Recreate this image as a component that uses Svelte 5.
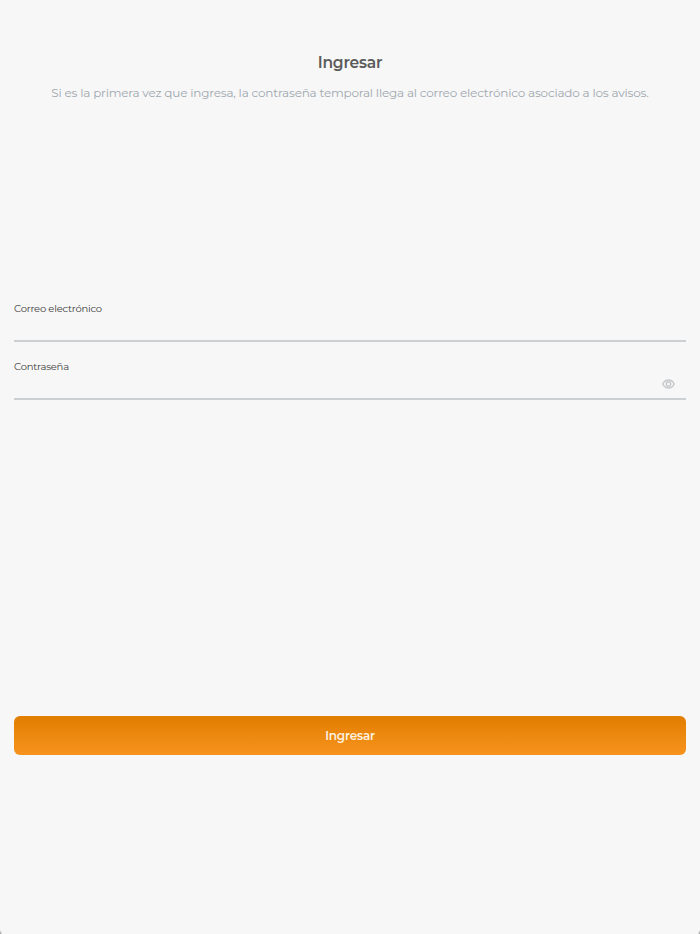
<script>
  let email = $state('');
  let password = $state('');
  let visible = $state(false);
</script>

<main>
  <header>
    <h1>Ingresar</h1>
    <p>Si es la primera vez que ingresa, la contraseña temporal llega al correo electrónico asociado a los avisos.</p>
  </header>
  <form onsubmit={(e) => e.preventDefault()}>
    <div class="fields">
      <div class="field">
        <label for="email">Correo electrónico</label>
        <input id="email" type="email" bind:value={email} />
      </div>
      <div class="field">
        <label for="password">Contraseña</label>
        <div class="row">
          <input id="password" type={visible ? 'text' : 'password'} bind:value={password} />
          <button class="eye" type="button" aria-label="Mostrar" onclick={() => (visible = !visible)}>
            <svg width="13" height="10" viewBox="0 0 13 10" fill="none" stroke="#c8c9cb">
              <path d="M.8 5C2 2.400 4.100 1 6.500 1s4.500 1.400 5.700 4C11 7.600 8.900 9 6.500 9S2 7.600.8 5Z" stroke-width="1.500" />
              <circle cx="6.500" cy="5" r="2.200" stroke-width="1.400" />
            </svg>
          </button>
        </div>
      </div>
    </div>
    <button class="submit" type="submit">Ingresar</button>
  </form>
  <i class="corner left"></i>
  <i class="corner right"></i>
</main>

<style>
  :global(body) { margin: 0; background: #f7f7f7; }
  main {
    position: relative;
    box-sizing: border-box;
    height: 934px;
    padding: 50px 14px 0;
    background: #f7f7f7;
    font-family: Montserrat, Inter, sans-serif;
    overflow: hidden;
  }
  header { height: 251px; text-align: center; }
  h1 {
    margin: 0;
    font-size: 15.5px;
    line-height: 25px;
    font-weight: 600;
    color: #5b5b5b;
    letter-spacing: -0.2px;
  }
  p {
    margin: 8px 0 0;
    font-size: 12px;
    line-height: 20px;
    color: #a0a7af;
    white-space: nowrap;
    letter-spacing: -0.185px;
  }
  .fields { height: 415px; }
  .field {
    box-sizing: border-box;
    height: 41px;
    margin-bottom: 17px;
    border-bottom: 2px solid #cdd0d2;
    display: flex;
    flex-direction: column;
  }
  label {
    font-size: 10px;
    line-height: 15px;
    color: #3c3c3c;
    letter-spacing: -0.22px;
  }
  input {
    flex: 1;
    min-width: 0;
    height: 24px;
    padding: 0;
    border: 0;
    outline: 0;
    background: transparent;
    font: inherit;
    font-size: 12px;
  }
  .row { display: flex; height: 24px; }
  .eye {
    display: flex;
    align-items: center;
    justify-content: center;
    width: 13px;
    height: 20px;
    margin: 0 11px 0 0;
    padding: 0;
    border: 0;
    background: none;
  }
  .submit {
    display: block;
    width: 100%;
    height: 39px;
    padding: 0;
    border: 0;
    border-radius: 6px;
    background: linear-gradient(#e17e00, #f7931e);
    color: #fdf0df;
    font: 600 12px/39px Montserrat, Inter, sans-serif;
    letter-spacing: -0.2px;
  }
  .corner {
    position: absolute;
    bottom: 0;
    width: 2px;
    height: 4px;
  }
  .left { left: 0; background: radial-gradient(farthest-side at 0 100%, #888, transparent); }
  .right { right: 0; background: radial-gradient(farthest-side at 100% 100%, #888, transparent); }
</style>
